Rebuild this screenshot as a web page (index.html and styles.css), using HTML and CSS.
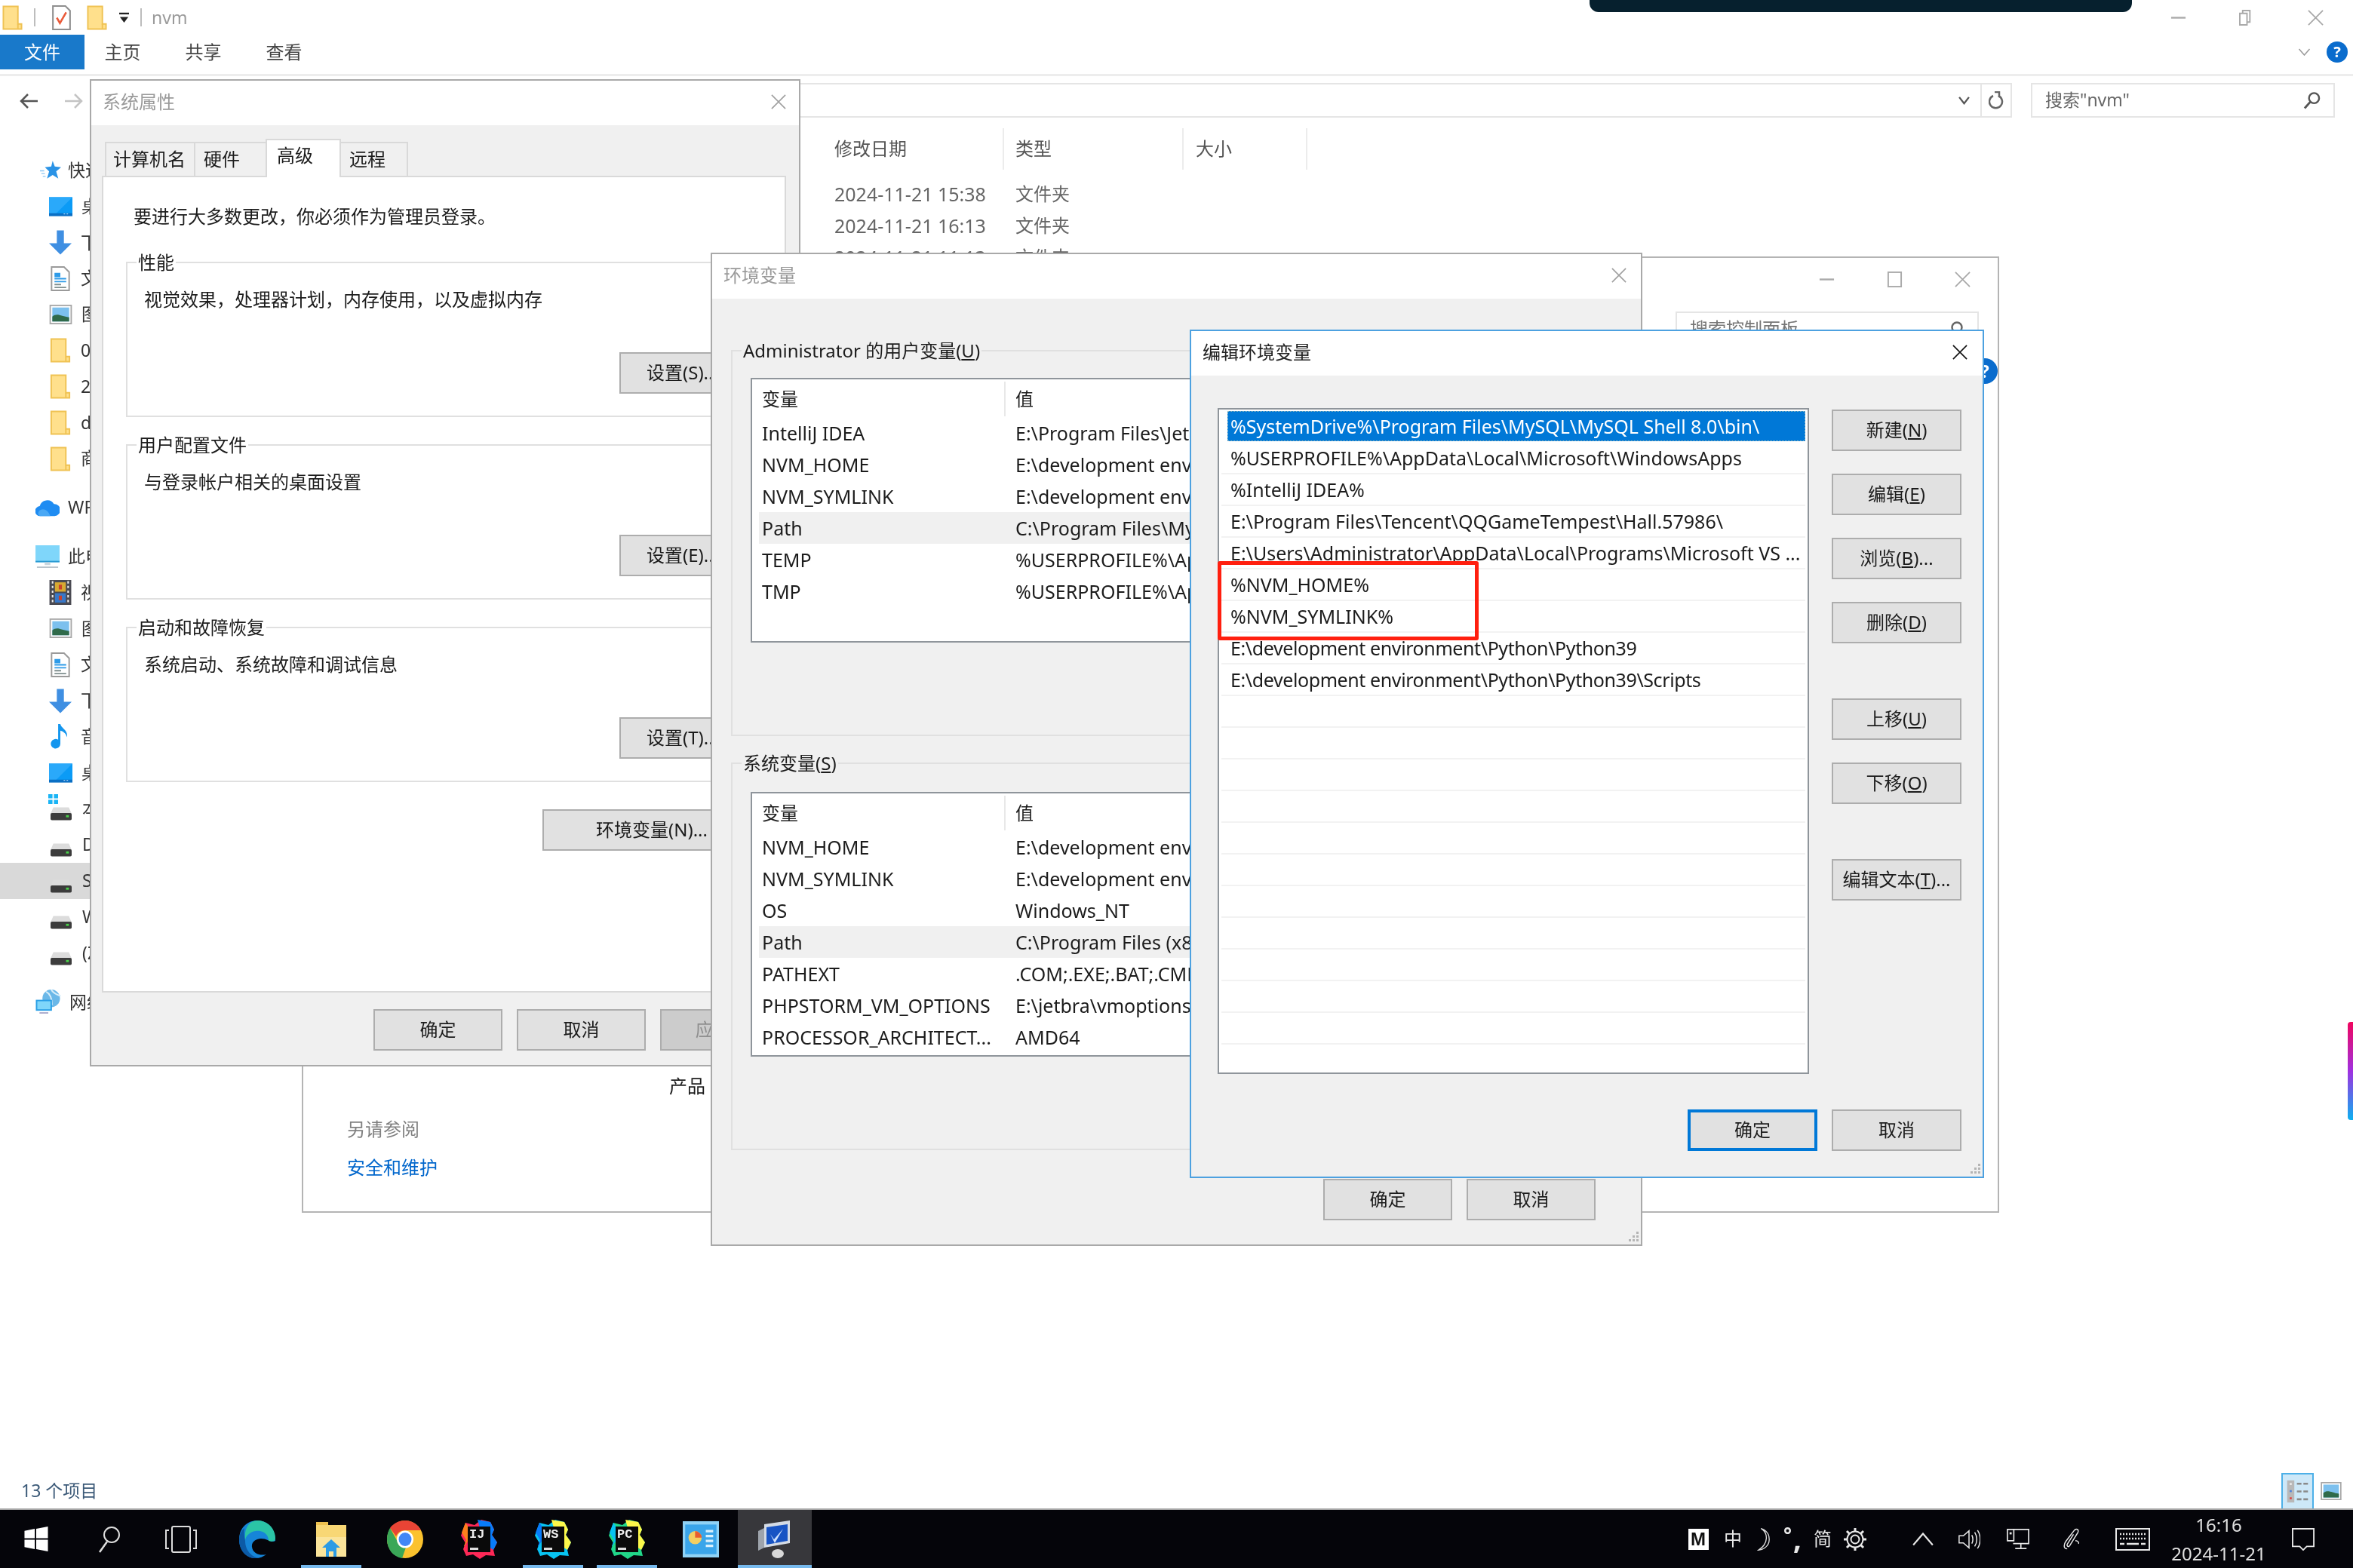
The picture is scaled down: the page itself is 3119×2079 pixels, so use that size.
FILE: index.html
```html
<!DOCTYPE html>
<html lang="zh-CN">
<head>
<meta charset="utf-8">
<title>nvm</title>
<link rel="stylesheet" href="styles.css">
</head>
<body>
<svg class="defs" aria-hidden="true">
  <symbol id="i-folder" viewBox="0 0 28 34"><path d="M1.5 1.500h20v24h5v7h-25z" fill="#ffe08c" stroke="#efc253" stroke-width="2"/><path d="M21.500 25.500v7" stroke="#efc253" stroke-width="2"/></symbol>
  <symbol id="i-desk" viewBox="0 0 32 26"><rect width="32" height="24" fill="#0b9bf6"/><path d="M0 0h32L8 24H0z" fill="#2aa9fa"/><rect y="22" width="32" height="4" fill="#0a6fc4"/><path d="M20 23h2M24 23h2" stroke="#cfe9ff"/></symbol>
  <symbol id="i-down" viewBox="0 0 32 34"><path d="M11 0h10v18h11L16 34 0 18h11z" fill="#3f8fe2"/></symbol>
  <symbol id="i-doc" viewBox="0 0 26 34"><path d="M1 1h17l7 7v25H1z" fill="#fff" stroke="#9a9a9a" stroke-width="2"/><path d="M6 10h6v4H6zM5 17h16M5 21h16" stroke="#2e9be8" stroke-width="2" fill="#2e9be8"/><path d="M5 25h9M5 29h16" stroke="#7f8f8f" stroke-width="2"/></symbol>
  <symbol id="i-pic" viewBox="0 0 32 28"><rect x="1" y="1" width="30" height="26" fill="#fff" stroke="#a8a8a8" stroke-width="2"/><rect x="4" y="4" width="24" height="20" fill="#7cc0ee"/><path d="M4 17c7-6 13 0 24 1v6H4z" fill="#2f6a4a"/></symbol>
  <symbol id="i-star" viewBox="0 0 30 26"><path d="M18 0l3 8 9 1-7 6 3 10-8-5-8 5 3-10-6-6 9-1z" fill="#2a93e6"/><path d="M0 14h6M2 18h5M4 22h4" stroke="#8cc5f2" stroke-width="1.500"/></symbol>
  <symbol id="i-cloud" viewBox="0 0 34 24"><path d="M7 24a7 7 0 0 1-1-14 11 11 0 0 1 20-3 8.500 8.500 0 0 1 1 17z" fill="#1f8cf2"/><path d="M6 24a5 5 0 0 1 2-9c4-2 10 1 13 9z" fill="#4aa8f5"/></symbol>
  <symbol id="i-pc" viewBox="0 0 34 32"><rect width="34" height="24" fill="#7fd6fa"/><rect y="22" width="34" height="2" fill="#2a9ad2"/><path d="M13 24h8v4h-8z" fill="#c9d6de"/><path d="M2 31h30" stroke="#b8c4cc" stroke-width="2"/></symbol>
  <symbol id="i-video" viewBox="0 0 28 32"><rect width="28" height="32" fill="#4a4a52"/><path d="M3 3h2M3 9h2M3 15h2M3 21h2M3 27h2M23 3h2M23 9h2M23 15h2M23 21h2M23 27h2" stroke="#eee" stroke-width="3"/><rect x="7" y="3" width="14" height="12" fill="#d8a932"/><rect x="7" y="17" width="14" height="12" fill="#3878c8"/><path d="M12 6h4v6h-4zM12 20h4v6h-4z" fill="#c8402a"/></symbol>
  <symbol id="i-music" viewBox="0 0 26 34"><path d="M10 0h3c1 6 11 8 9 18-1-5-5-8-9-9v18a6.500 6.500 0 1 1-3-5.500z" fill="#1496ee"/></symbol>
  <symbol id="i-drive" viewBox="0 0 30 18"><path d="M4 0h22l4 9H0z" fill="#dcdcdc"/><rect y="8" width="30" height="10" rx="2" fill="#3c3c3c"/><rect x="22" y="11" width="4" height="3" fill="#4ad24a"/></symbol>
  <symbol id="i-flag" viewBox="0 0 14 14"><path d="M0 0h6v6H0zM8 0h6v6H8zM0 8h6v6H0zM8 8h6v6H8z" fill="#1ab4f5"/></symbol>
  <symbol id="i-net" viewBox="0 0 34 34"><circle cx="21" cy="12" r="12" fill="#6bb8e8"/><path d="M14 3c4 2 8 7 8 18M21 0c3 6 9 7 13 9" stroke="#d8eefa" fill="none" stroke-width="2"/><rect y="14" width="22" height="15" fill="#2a9fe6"/><rect x="2" y="16" width="18" height="11" fill="#7fd6fa"/><path d="M5 32h12" stroke="#aac" stroke-width="2"/></symbol>
  <symbol id="i-close" viewBox="0 0 22 22"><path d="M1 1l20 20M21 1L1 21" fill="none" stroke="currentColor" stroke-width="1.800"/></symbol>
  <symbol id="i-grip" viewBox="0 0 16 16"><path d="M12 1h3v3h-3zM7 6h3v3H7zM12 6h3v3h-3zM2 11h3v3H2zM7 11h3v3H7zM12 11h3v3h-3z" fill="#b4b4b4"/></symbol>
  <symbol id="i-search" viewBox="0 0 24 24"><circle cx="15" cy="9" r="7" fill="none" stroke="currentColor" stroke-width="2.500"/><path d="M10 14L2 23" stroke="currentColor" stroke-width="3"/></symbol>
  <symbol id="i-jb" viewBox="0 0 48 52"><path d="M6 4l12 3 9-7 12 3 5 10-3 7 7 10-5 10 2 8-12-1-8 5-9-6-9 2-4-9 3-8-6-10z" fill="var(--jb1)"/><path d="M22 0l17 3 5 10-3 7 7 10-5 10-12-8z" fill="var(--jb2)"/><path d="M6 4l10 14L4 36l3 11-3-12 3-8-6-10z" fill="var(--jb3)"/><rect x="9" y="9" width="30" height="34" fill="#0a0a0a"/><rect x="12" y="37" width="11" height="3" fill="#ddd"/></symbol>
</svg>

<div class="desktop">
  <div class="explorer">
    <div class="titlebar">
      <svg class="ico-folder-top"><use href="#i-folder"/></svg>
      <span class="tb-sep"></span>
      <svg class="ico-check" viewBox="0 0 24 32"><path d="M1 1h16l6 6v24H1z" fill="#fff" stroke="#8f8f8f" stroke-width="2"/><path d="M6 16l4 7 8-14" fill="none" stroke="#ea5b3a" stroke-width="2.500"/></svg>
      <svg class="ico-folder-top"><use href="#i-folder"/></svg>
      <svg class="ico-qat" viewBox="0 0 14 16"><path d="M0 2h14" stroke="#222" stroke-width="2.500"/><path d="M1 7h12l-6 8z" fill="#222"/></svg>
      <span class="tb-sep"></span>
      <span class="tb-title">nvm</span>
      <div class="notch"></div>
      <div class="winbtns">
        <svg class="wb" viewBox="0 0 22 22"><path d="M1 11h20" stroke="#aaa" stroke-width="2.500"/></svg>
        <svg class="wb" viewBox="0 0 22 22"><path d="M5 5V1h10v16h-4M1 5h10v16H1z" fill="none" stroke="#aaa" stroke-width="2"/></svg>
        <svg class="wb wb-x"><use href="#i-close"/></svg>
      </div>
    </div>
    <div class="ribbon">
      <span class="rtab rtab-on">文件</span>
      <span class="rtab">主页</span>
      <span class="rtab">共享</span>
      <span class="rtab">查看</span>
      <svg class="r-chev" viewBox="0 0 16 10"><path d="M1 1l7 8 7-8" fill="none" stroke="#999" stroke-width="1.500"/></svg>
      <span class="helpdot">?</span>
    </div>
    <div class="navrow">
      <svg class="nav-arrow" viewBox="0 0 26 22"><path d="M25 11H3M12 2l-9 9 9 9" fill="none" stroke="#555" stroke-width="2.500"/></svg>
      <svg class="nav-arrow nav-fwd" viewBox="0 0 26 22"><path d="M1 11h22M14 2l9 9-9 9" fill="none" stroke="#c4c4c4" stroke-width="2.500"/></svg>
      <div class="addr">
        <svg class="addr-chev" viewBox="0 0 16 12"><path d="M1 1l7 9 7-9" fill="none" stroke="#555" stroke-width="2.500"/></svg>
        <span class="addr-refresh"><svg class="refresh-ico" viewBox="0 0 20 24"><path d="M6 6a8.500 8.500 0 1 0 7 0" fill="none" stroke="#666" stroke-width="2.500"/><path d="M8 1h6v7" fill="none" stroke="#666" stroke-width="2.500"/></svg></span>
      </div>
      <div class="searchbox">
        <span class="search-text">搜索"nvm"</span>
        <svg class="search-ico"><use href="#i-search"/></svg>
      </div>
    </div>
    <div class="main">
      <nav class="sidebar">
        <div class="sb-row sb-top"><svg class="sb-ico ic-star"><use href="#i-star"/></svg><span>快速访问</span></div>
        <div class="sb-row sb-sub"><svg class="sb-ico ic-wide"><use href="#i-desk"/></svg><span>桌面</span></div>
        <div class="sb-row sb-sub"><svg class="sb-ico ic-tall"><use href="#i-down"/></svg><span>下载</span></div>
        <div class="sb-row sb-sub"><svg class="sb-ico ic-tall"><use href="#i-doc"/></svg><span>文档</span></div>
        <div class="sb-row sb-sub"><svg class="sb-ico ic-wide"><use href="#i-pic"/></svg><span>图片</span></div>
        <div class="sb-row sb-sub"><svg class="sb-ico ic-tall"><use href="#i-folder"/></svg><span>01</span></div>
        <div class="sb-row sb-sub"><svg class="sb-ico ic-tall"><use href="#i-folder"/></svg><span>2024</span></div>
        <div class="sb-row sb-sub"><svg class="sb-ico ic-tall"><use href="#i-folder"/></svg><span>docs</span></div>
        <div class="sb-row sb-sub"><svg class="sb-ico ic-tall"><use href="#i-folder"/></svg><span>商城</span></div>
        <div class="sb-row sb-top sb-gap"><svg class="sb-ico ic-cloud"><use href="#i-cloud"/></svg><span>WPS网盘</span></div>
        <div class="sb-row sb-top sb-gap"><svg class="sb-ico ic-cloud"><use href="#i-pc"/></svg><span>此电脑</span></div>
        <div class="sb-row sb-sub"><svg class="sb-ico ic-tall"><use href="#i-video"/></svg><span>视频</span></div>
        <div class="sb-row sb-sub"><svg class="sb-ico ic-wide"><use href="#i-pic"/></svg><span>图片</span></div>
        <div class="sb-row sb-sub"><svg class="sb-ico ic-tall"><use href="#i-doc"/></svg><span>文档</span></div>
        <div class="sb-row sb-sub"><svg class="sb-ico ic-tall"><use href="#i-down"/></svg><span>下载</span></div>
        <div class="sb-row sb-sub"><svg class="sb-ico ic-tall"><use href="#i-music"/></svg><span>音乐</span></div>
        <div class="sb-row sb-sub"><svg class="sb-ico ic-wide"><use href="#i-desk"/></svg><span>桌面</span></div>
        <div class="sb-row sb-sub"><svg class="sb-ico ic-drive"><use href="#i-drive"/></svg><svg class="ic-flag"><use href="#i-flag"/></svg><span>本地磁盘 (C:)</span></div>
        <div class="sb-row sb-sub"><svg class="sb-ico ic-drive"><use href="#i-drive"/></svg><span>D (D:)</span></div>
        <div class="sb-row sb-sub sb-on"><svg class="sb-ico ic-drive"><use href="#i-drive"/></svg><span>S (S:)</span></div>
        <div class="sb-row sb-sub"><svg class="sb-ico ic-drive"><use href="#i-drive"/></svg><span>W (W:)</span></div>
        <div class="sb-row sb-sub"><svg class="sb-ico ic-drive"><use href="#i-drive"/></svg><span>(Z:)</span></div>
        <div class="sb-row sb-top sb-gap"><svg class="sb-ico ic-net"><use href="#i-net"/></svg><span>网络</span></div>
      </nav>
      <section class="files">
        <div class="f-head">
          <span class="fc fc-date">修改日期</span>
          <span class="fc fc-type">类型</span>
          <span class="fc fc-size">大小</span>
        </div>
        <div class="f-row"><span class="fc-date">2024-11-21 15:38</span><span class="fc-type f-cjk">文件夹</span></div>
        <div class="f-row"><span class="fc-date">2024-11-21 16:13</span><span class="fc-type f-cjk">文件夹</span></div>
        <div class="f-row"><span class="fc-date">2024-11-21 11:13</span><span class="fc-type f-cjk">文件夹</span></div>
      </section>
    </div>
    <div class="statusbar">
      <span class="st-count">13 个项目</span>
      <div class="viewbtns">
        <span class="vb-on"><svg class="vb-list" viewBox="0 0 36 36"><rect x="2" y="1" width="11" height="34" fill="#b8b8b8"/><path d="M6 5h3v3H6z" fill="#eee"/><path d="M6 16h3v3H6z" fill="#4a80e0"/><path d="M6 27h3v3H6z" fill="#e04040"/><path d="M17 6h7M27 6h7M17 18h7M27 18h7M17 30h7M27 30h7" stroke="#8a8a8a" stroke-width="3"/></svg></span>
        <svg class="vb-pic"><use href="#i-pic"/></svg>
      </div>
    </div>
  </div>

  <footer class="taskbar">
    <div class="tb-group tb-group-sys">
      <span class="tk"><svg class="tk-win" viewBox="0 0 32 34"><path d="M0 6l14-3v13H0zM16 3l16-3v16H16zM0 18h14v13L0 28zM16 18h16v16l-16-3z" fill="#fff"/></svg></span>
      <span class="tk"><svg class="tk-lens" viewBox="0 0 32 36"><circle cx="20" cy="12" r="10" fill="none" stroke="#ddd" stroke-width="2"/><path d="M14 21L4 35" stroke="#ddd" stroke-width="2.500"/></svg></span>
      <span class="tk"><svg class="tk-view" viewBox="0 0 42 36"><rect x="9" y="1" width="24" height="34" rx="2" fill="none" stroke="#ddd" stroke-width="2"/><path d="M5 6H1v24h4M37 6h4v24h-4" fill="none" stroke="#ddd" stroke-width="2"/></svg></span>
    </div>
    <div class="tb-group">
      <span class="tk"><svg class="tk-app" viewBox="0 0 48 50"><path d="M24 0C10 0 0 11 0 25c0 14 9 25 22 25 5 0 10-2 14-5-8 2-18-1-19-10-1-7 6-11 12-11 9 0 13 6 19 3C48 11 38 0 24 0z" fill="#1685d8"/><path d="M24 0c12 0 24 9 24 24 0 3-4 5-9 3 0-9-8-14-17-13C14 15 8 21 8 27 6 11 13 0 24 0z" fill="#2bc4a6"/><path d="M8 27c0 12 8 22 20 23-15 3-28-7-28-25 0-6 3-12 7-15-1 5 0 12 1 17z" fill="#0c5aa6"/></svg></span>
      <span class="tk tk-open"><svg class="tk-app" viewBox="0 0 44 50"><path d="M2 2h16v4h24v42H2z" fill="#f8d775"/><path d="M2 2h16v4H2z" fill="#eec150"/><path d="M2 22h40v26H2z" fill="#fbe49b"/><path d="M22 25l12 11h-5v12H15V36h-5z" fill="#2c9be4"/><rect x="19" y="41" width="6" height="7" fill="#fbe49b"/></svg></span>
      <span class="tk"><svg class="tk-app" viewBox="0 0 48 50"><ellipse cx="24" cy="25" rx="24" ry="25" fill="#fbc22e"/><path d="M24 0c9 0 17 5 21 13H24c-6 0-10 3-12 8L4 10C8 4 16 0 24 0z" fill="#e94435"/><path d="M4 10l10 18c2 4 7 6 12 5L20 50C8 48 0 38 0 25c0-5 1-10 4-15z" fill="#3aa757"/><ellipse cx="24" cy="25" rx="11" ry="11.500" fill="#fff"/><ellipse cx="24" cy="25" rx="8.500" ry="9" fill="#4287f5"/></svg></span>
      <span class="tk"><span class="jb jb-ij"><svg class="jb-ico"><use href="#i-jb"/></svg><b class="jb-txt">IJ</b></span></span>
      <span class="tk tk-open"><span class="jb jb-ws"><svg class="jb-ico"><use href="#i-jb"/></svg><b class="jb-txt">WS</b></span></span>
      <span class="tk tk-open"><span class="jb jb-pc"><svg class="jb-ico"><use href="#i-jb"/></svg><b class="jb-txt">PC</b></span></span>
      <span class="tk"><svg class="tk-app" viewBox="0 0 44 44"><rect width="44" height="44" fill="#8fd2f5"/><rect x="3" y="4" width="38" height="36" fill="#3aa5ea"/><circle cx="15" cy="20" r="8" fill="#f4cf62"/><path d="M15 20V12a8 8 0 0 1 8 8z" fill="#e85c30"/><path d="M28 12h9M28 18h9M28 24h9M28 30h9" stroke="#d9f0fd" stroke-width="3"/></svg></span>
      <span class="tk tk-active"><svg class="tk-app" viewBox="0 0 48 50"><path d="M2 14L10 10v26l-8 4z" fill="#9ea4ac"/><path d="M10 5l34-5v30L10 36z" fill="#d4dbe5"/><path d="M13 9l28-4v22l-28 5z" fill="#1854c4"/><path d="M18 18l5 7 12-14-11 19z" fill="#cfe2ff"/><ellipse cx="28" cy="44" rx="8" ry="6" fill="#d8d8d8"/></svg></span>
    </div>
    <div class="tray">
      <span class="tray-m">M</span>
      <span class="tray-t">中</span>
      <svg class="tray-moon" viewBox="0 0 20 34"><path d="M6 1c10 6 12 22-4 32 4 0 16-4 16-16C18 8 12 3 6 1z" fill="none" stroke="#ddd" stroke-width="1.500"/></svg>
      <span class="tray-p"><i>°</i><b>,</b></span>
      <span class="tray-t">简</span>
      <svg class="tray-gear" viewBox="0 0 32 32"><circle cx="16" cy="16" r="5.500" fill="none" stroke="#e8e8e8" stroke-width="2"/><circle cx="16" cy="16" r="10.500" fill="none" stroke="#e8e8e8" stroke-width="2"/><path d="M16 1v5M16 26v5M1 16h5M26 16h5M5 5l4 4M23 23l4 4M27 5l-4 4M9 23l-4 4" stroke="#e8e8e8" stroke-width="3"/></svg>
      <span></span>
      <svg class="tray-ic" viewBox="0 0 28 18"><path d="M2 16L14 2l12 14" fill="none" stroke="#e8e8e8" stroke-width="2"/></svg>
      <svg class="tray-ic" viewBox="0 0 32 30"><path d="M2 10h6l8-7v24l-8-7H2z" fill="none" stroke="#e8e8e8" stroke-width="1.600"/><path d="M20 9c2 4 2 8 0 12M24 5c4 6 4 14 0 20M28 2c5 7 5 19 0 26" fill="none" stroke="#e8e8e8" stroke-width="1.600"/></svg>
      <svg class="tray-ic" viewBox="0 0 32 30"><path d="M9 1h22v20H9M1 1h9v16H1zM20 21v6M12 28h16" fill="none" stroke="#e8e8e8" stroke-width="1.800"/><path d="M4 5h3v3H4z" fill="#e8e8e8"/></svg>
      <svg class="tray-ic" viewBox="0 0 28 36"><path d="M7 33C0 33 2 25 5 21L18 4c3-4 8-2 6 3L11 28c-2 3-5 1-4-2L17 10" fill="none" stroke="#e8e8e8" stroke-width="1.800"/><path d="M20 20c4 0 6 3 5 5" fill="none" stroke="#e8e8e8" stroke-width="1.800"/></svg>
      <svg class="tray-kb" viewBox="0 0 46 30"><rect x="1" y="1" width="44" height="28" fill="none" stroke="#e8e8e8" stroke-width="2"/><path d="M6 8h34M6 14h34" stroke="#e8e8e8" stroke-width="2.500" stroke-dasharray="2 2"/><path d="M6 21h6M15 21h16M34 21h6" stroke="#e8e8e8" stroke-width="2.500"/></svg>
      <div class="clock"><span>16:16</span><span>2024-11-21</span></div>
      <svg class="tray-ic" viewBox="0 0 32 32"><path d="M1 1h30v25H21l-5 5-5-5H1z" fill="none" stroke="#e8e8e8" stroke-width="2"/></svg>
    </div>
  </footer>

  <div class="win win-cp">
    <div class="cp-title">
      <svg class="wb" viewBox="0 0 22 22"><path d="M1 11h20" stroke="#aaa" stroke-width="2.500"/></svg>
      <svg class="wb" viewBox="0 0 22 22"><rect x="2" y="1" width="18" height="20" fill="none" stroke="#aaa" stroke-width="2"/></svg>
      <svg class="wb wb-x"><use href="#i-close"/></svg>
    </div>
    <div class="cp-search"><span>搜索控制面板</span><svg class="cp-lens" viewBox="0 0 20 20"><circle cx="10" cy="8" r="6.500" fill="none" stroke="#666" stroke-width="2.500"/></svg></div>
    <span class="cp-help">?</span>
    <div class="cp-side">
      <p class="cp-product">产品</p>
      <p class="cp-see">另请参阅</p>
      <p class="cp-link">安全和维护</p>
    </div>
  </div>

  <div class="win win-sys">
    <div class="dlg-title"><span>系统属性</span><svg class="dlg-x"><use href="#i-close"/></svg></div>
    <div class="dlg-body sys-body">
      <div class="tabs">
        <span class="tab tab-a">计算机名</span>
        <span class="tab tab-b">硬件</span>
        <span class="tab tab-c tab-on">高级</span>
        <span class="tab tab-d">远程</span>
      </div>
      <div class="panel">
        <p class="panel-note">要进行大多数更改，你必须作为管理员登录。</p>
        <div class="sys-group">
          <span class="legend">性能</span>
          <p class="sys-desc">视觉效果，处理器计划，内存使用，以及虚拟内存</p>
          <button class="btn btn-set">设置(S)...</button>
        </div>
        <div class="sys-group">
          <span class="legend">用户配置文件</span>
          <p class="sys-desc">与登录帐户相关的桌面设置</p>
          <button class="btn btn-set">设置(E)...</button>
        </div>
        <div class="sys-group">
          <span class="legend">启动和故障恢复</span>
          <p class="sys-desc">系统启动、系统故障和调试信息</p>
          <button class="btn btn-set">设置(T)...</button>
        </div>
        <button class="btn btn-env">环境变量(N)...</button>
      </div>
      <div class="dlg-foot sys-foot">
        <button class="btn">确定</button>
        <button class="btn">取消</button>
        <button class="btn btn-off">应用(A)</button>
      </div>
    </div>
  </div>

  <div class="win win-env">
    <div class="dlg-title"><span>环境变量</span><svg class="dlg-x"><use href="#i-close"/></svg></div>
    <div class="dlg-body env-body">
      <div class="env-group">
        <span class="legend legend-env">Administrator 的用户变量(<u>U</u>)</span>
        <div class="lv">
          <div class="lv-head"><span class="lv-k">变量</span><span class="lv-v">值</span></div>
          <div class="lv-row"><span class="lv-k">IntelliJ IDEA</span><span class="lv-v">E:\Program Files\JetBrains\IntelliJ IDEA\bin;</span></div>
          <div class="lv-row"><span class="lv-k">NVM_HOME</span><span class="lv-v">E:\development environment\nvm</span></div>
          <div class="lv-row"><span class="lv-k">NVM_SYMLINK</span><span class="lv-v">E:\development environment\nodejs</span></div>
          <div class="lv-row lv-hi"><span class="lv-k">Path</span><span class="lv-v">C:\Program Files\MySQL\MySQL Shell 8.0\bin\</span></div>
          <div class="lv-row"><span class="lv-k">TEMP</span><span class="lv-v">%USERPROFILE%\AppData\Local\Temp</span></div>
          <div class="lv-row"><span class="lv-k">TMP</span><span class="lv-v">%USERPROFILE%\AppData\Local\Temp</span></div>
        </div>
      </div>
      <div class="env-group env-group-sys">
        <span class="legend legend-env">系统变量(<u>S</u>)</span>
        <div class="lv">
          <div class="lv-head"><span class="lv-k">变量</span><span class="lv-v">值</span></div>
          <div class="lv-row"><span class="lv-k">NVM_HOME</span><span class="lv-v">E:\development environment\nvm</span></div>
          <div class="lv-row"><span class="lv-k">NVM_SYMLINK</span><span class="lv-v">E:\development environment\nodejs</span></div>
          <div class="lv-row"><span class="lv-k">OS</span><span class="lv-v">Windows_NT</span></div>
          <div class="lv-row lv-hi"><span class="lv-k">Path</span><span class="lv-v">C:\Program Files (x86)\Common Files\Oracle</span></div>
          <div class="lv-row"><span class="lv-k">PATHEXT</span><span class="lv-v">.COM;.EXE;.BAT;.CMD;.VBS;.VBE;.JS;.JSE</span></div>
          <div class="lv-row"><span class="lv-k">PHPSTORM_VM_OPTIONS</span><span class="lv-v">E:\jetbra\vmoptions\phpstorm.vmoptions</span></div>
          <div class="lv-row"><span class="lv-k">PROCESSOR_ARCHITECT...</span><span class="lv-v">AMD64</span></div>
        </div>
      </div>
      <div class="dlg-foot env-foot">
        <button class="btn">确定</button>
        <button class="btn">取消</button>
      </div>
      <svg class="grip"><use href="#i-grip"/></svg>
    </div>
  </div>

  <div class="win win-edit">
    <div class="dlg-title"><span>编辑环境变量</span><svg class="dlg-x"><use href="#i-close"/></svg></div>
    <div class="dlg-body edit-body">
      <div class="edit-main">
        <div class="pathlist">
          <div class="p-row p-sel"><span>%SystemDrive%\Program Files\MySQL\MySQL Shell 8.0\bin\</span></div>
          <div class="p-row"><span>%USERPROFILE%\AppData\Local\Microsoft\WindowsApps</span></div>
          <div class="p-row"><span>%IntelliJ IDEA%</span></div>
          <div class="p-row"><span>E:\Program Files\Tencent\QQGameTempest\Hall.57986\</span></div>
          <div class="p-row"><span>E:\Users\Administrator\AppData\Local\Programs\Microsoft VS ...</span></div>
          <div class="p-row"><span>%NVM_HOME%</span></div>
          <div class="p-row"><span>%NVM_SYMLINK%</span></div>
          <div class="p-row p-tight"><span>E:\development environment\Python\Python39</span></div>
          <div class="p-row p-tight"><span>E:\development environment\Python\Python39\Scripts</span></div>
          <div class="p-row"></div><div class="p-row"></div><div class="p-row"></div>
          <div class="p-row"></div><div class="p-row"></div><div class="p-row"></div>
          <div class="p-row"></div><div class="p-row"></div><div class="p-row"></div>
          <div class="p-row"></div><div class="p-row"></div>
        </div>
        <div class="edit-btns">
          <button class="btn">新建(<u>N</u>)</button>
          <button class="btn">编辑(<u>E</u>)</button>
          <button class="btn">浏览(<u>B</u>)...</button>
          <button class="btn">删除(<u>D</u>)</button>
          <button class="btn btn-sep">上移(<u>U</u>)</button>
          <button class="btn">下移(<u>O</u>)</button>
          <button class="btn btn-sep">编辑文本(<u>T</u>)...</button>
        </div>
      </div>
      <div class="dlg-foot edit-foot">
        <button class="btn btn-def">确定</button>
        <button class="btn">取消</button>
      </div>
      <div class="redbox"></div>
      <svg class="grip"><use href="#i-grip"/></svg>
    </div>
  </div>

  <div class="edgebar"></div>
</div>
</body>
</html>
```
FILE: styles.css
```css
* { box-sizing: border-box; }
html, body { margin: 0; padding: 0; background: #fff; }
p { margin: 0; }
.defs { position: absolute; width: 0; height: 0; }
.desktop {
  position: relative; width: 3119px; height: 2079px; overflow: hidden;
  display: flex; flex-direction: column; background: #fff; color: #1c1c1c;
  font: 24px/1.2 "Noto Sans", "Noto Sans CJK SC", sans-serif;
  filter: blur(0.7px);
}
.explorer { flex: 1; display: flex; flex-direction: column; min-height: 0; }

/* title bar */
.titlebar { height: 46px; display: flex; align-items: center; padding-left: 3px; position: relative; }
.ico-folder-top { width: 27px; height: 33px; }
.titlebar > .ico-folder-top:nth-of-type(3) { margin-left: 21px; }
.tb-sep { width: 2px; height: 24px; background: #bdbdbd; margin: 0 0 0 15px; }
.ico-check { width: 25px; height: 33px; margin-left: 22px; }
.ico-qat { width: 13px; height: 15px; margin-left: 16px; }
.tb-sep + .tb-title { margin-left: 13px; padding-top: 2px; }
.tb-title { color: #9a9a9a; font-size: 23px; }
.notch { position: absolute; left: 2107px; top: 0; width: 719px; height: 16px; background: #06202e; border-radius: 0 0 12px 12px; }
.winbtns { margin-left: auto; display: flex; gap: 70px; padding-right: 39px; }
.wb { width: 21px; height: 21px; }
.wb-x { color: #a8a8a8; }

/* ribbon */
.ribbon { height: 55px; border-bottom: 3px solid #ededed; display: flex; align-items: flex-start; }
.rtab { width: 107px; height: 46px; text-align: center; line-height: 46px; color: #444; font-size: 24px; }
.rtab-on { width: 112px; background: #1979ca; color: #fff; margin-right: -3px; }
.r-chev { width: 17px; height: 10px; margin: 18px 0 0 auto; }
.helpdot { width: 28px; height: 28px; border-radius: 50%; background: #0a6ccd; color: #fff; text-align: center; font-size: 20px; line-height: 28px; margin: 9px 7px 0 21px; font-weight: 700; }

/* nav row */
.navrow { height: 69px; display: flex; align-items: flex-start; padding-top: 9px; }
.nav-arrow { width: 26px; height: 22px; margin: 13px 0 0 25px; }
.nav-fwd { margin-left: 34px; }
.addr { margin-left: 920px; flex: 1; height: 46px; border: 2px solid #e5e5e5; border-left: 0; display: flex; align-items: center; justify-content: flex-end; }
.addr-chev { width: 15px; height: 11px; margin-right: 14px; }
.addr-refresh { width: 40px; height: 100%; border-left: 2px solid #e5e5e5; display: flex; align-items: center; justify-content: center; }
.refresh-ico { width: 20px; height: 24px; }
.searchbox { margin: 0 24px 0 25px; width: 403px; height: 46px; border: 2px solid #e5e5e5; display: flex; align-items: center; justify-content: space-between; padding: 0 17px 0 17px; color: #666; font-size: 23px; }
.search-ico { width: 23px; height: 24px; color: #555; }

/* main */
.main { flex: 1; display: flex; min-height: 0; }
.sidebar { width: 210px; padding-top: 32px; font-size: 23px; color: #333; }
.sb-row { height: 47.8px; display: flex; align-items: center; position: relative; white-space: nowrap; }
.sb-top { padding-left: 47px; }
.sb-sub { padding-left: 65px; }
.sb-gap { margin-top: 17px; }
.sb-on { background: #d9d9d9; }
.sb-ico { flex: none; margin-right: 12px; }
.ic-star { width: 28px; height: 25px; margin-left: 6px; margin-right: 9px; }
.ic-wide { width: 31px; height: 26px; }
.ic-tall { width: 30px; height: 33px; }
.ic-cloud { width: 32px; height: 30px; margin-right: 11px; }
.ic-net { width: 34px; height: 33px; margin-right: 11px; }
.ic-drive { width: 28px; height: 18px; margin: 14px 14px 0 2px; }
.ic-flag { position: absolute; left: 64px; top: 4px; width: 13px; height: 13px; }
.files { flex: 1; padding-left: 885px; }
.f-head { height: 55px; display: flex; align-items: center; color: #555; }
.fc { height: 100%; display: flex; align-items: center; border-right: 2px solid #ececec; }
.f-head + .f-row { margin-top: 11px; }
.f-row { height: 42px; display: flex; align-items: center; color: #666; font-size: 25px; }
.f-cjk { font-size: 24px; }
.fc-date { width: 236px; padding-left: 11px; }
.fc-type { width: 238px; padding-left: 15px; }
.fc-size { width: 164px; padding-left: 16px; }

/* status */
.statusbar { height: 47px; display: flex; align-items: center; justify-content: space-between; padding: 0 14px 0 28px; color: #3c5a78; font-size: 23px; }
.viewbtns { display: flex; align-items: center; height: 100%; gap: 8px; }
.vb-on { width: 43px; height: 47px; background: #cde8f8; border: 2px solid #4db0e8; border-bottom: 0; display: flex; align-items: center; justify-content: center; }
.vb-list { width: 31px; height: 31px; }
.vb-pic { width: 30px; height: 24px; }

/* taskbar */
.taskbar { height: 79px; flex: none; background: #05050a; border-top: 2px solid #a6a6a6; display: flex; align-items: stretch; }
.tb-group { display: flex; }
.tb-group-sys { width: 292px; }
.tb-group-sys .tk { width: 96px; }
.tk { width: 98px; display: flex; align-items: center; justify-content: center; position: relative; }
.tk-open::after, .tk-active::after { content: ""; position: absolute; left: 9px; right: 9px; bottom: 0; height: 4px; background: #76b9ed; }
.tk-active { background: #37373b; }
.tk-active::after { left: 0; right: 0; }
.tk-win { width: 32px; height: 33px; }
.tk-lens { width: 32px; height: 36px; }
.tk-view { width: 42px; height: 36px; }
.tk-app { width: 48px; height: 50px; }
.jb { position: relative; width: 48px; height: 52px; display: block; --jb1: #fe2857; --jb2: #087cfa; --jb3: #fc801d; }
.jb-ws { --jb1: #07c3f2; --jb2: #fcf84a; --jb3: #087cfa; }
.jb-pc { --jb1: #21d789; --jb2: #fcf84a; --jb3: #07c3f2; }
.jb-ico { width: 48px; height: 52px; }
.jb-txt { position: absolute; left: 11px; top: 11px; font: 700 17px/18px "Liberation Mono", monospace; color: #eee; }
.tray { margin-left: auto; margin-right: 18px; display: grid; grid-template-columns: 40px 52px 30px 46px 34px 52px 28px 72px 50px 80px 62px 100px 128px 96px; align-items: center; justify-items: center; color: #e8e8e8; }
.tray-m { width: 27px; height: 28px; background: #fff; color: #111; text-align: center; font: 700 24px/28px "Liberation Sans", sans-serif; }
.tray-t { font-size: 24px; }
.tray-moon { width: 18px; height: 32px; }
.tray-p { display: flex; align-items: flex-start; height: 40px; }
.tray-p i { font: 700 26px/26px "Noto Sans", sans-serif; }
.tray-p b { font: 700 38px/36px "Noto Sans", sans-serif; margin-left: 2px; }
.tray-gear { width: 32px; height: 32px; }
.tray-ic { width: 30px; height: 30px; }
.tray-kb { width: 46px; height: 30px; }
.clock { display: flex; flex-direction: column; align-items: center; gap: 10px; font-size: 24px; line-height: 28px; color: #e0e0e0; }

/* windows */
.win { position: absolute; background: #fff; display: flex; flex-direction: column; border: 2px solid #a9a9a9; }
.win-cp { left: 400px; top: 340px; width: 2250px; height: 1268px; border-color: #b4b4b4; z-index: 1; display: block; }
.win-sys { left: 119px; top: 105px; width: 942px; height: 1309px; z-index: 2; }
.win-env { left: 942px; top: 335px; width: 1235px; height: 1317px; z-index: 3; }
.win-edit { left: 1577px; top: 437px; width: 1053px; height: 1125px; z-index: 4; border-color: #4da1e0; }

.dlg-title { height: 59px; flex: none; display: flex; align-items: center; justify-content: space-between; padding: 0 19px 3px 15px; color: #9a9a9a; font-size: 24px; background: #fff; }
.dlg-x { width: 20px; height: 20px; color: #a0a0a0; }
.win-sys .dlg-title { padding-right: 17px; }
.win-edit .dlg-title { color: #222; padding: 0 20px 3px 15px; }
.win-edit .dlg-x { color: #111; }
.dlg-body { flex: 1; background: #f0f0f0; position: relative; display: flex; flex-direction: column; min-height: 0; }
.dlg-foot { display: flex; justify-content: flex-end; gap: 19px; }

.btn { width: 171px; height: 55px; padding: 0; background: #e1e1e1; border: 2px solid #adadad; color: #1c1c1c; font: inherit; white-space: nowrap; overflow: hidden; flex: none; }
.btn-off { background: #cccccc; color: #8f8f8f; }
.btn-def { border: 4px solid #0078d7; }

/* control panel behind */
.cp-title { height: 56px; display: flex; justify-content: flex-end; align-items: center; gap: 69px; padding-right: 36px; }
.cp-search { margin: 15px 25px 0 auto; width: 402px; height: 46px; border: 2px solid #e5e5e5; display: flex; align-items: center; justify-content: space-between; padding: 0 17px; color: #777; }
.cp-lens { width: 20px; height: 20px; }
.cp-help { position: absolute; left: 2212px; top: 133px; width: 34px; height: 34px; border-radius: 50%; background: #0a6ccd; color: #fff; text-align: center; line-height: 34px; font-weight: 700; }
.cp-side { padding: 966px 0 0 58px; position: relative; }
.cp-product { margin-left: 427px; line-height: 30px; }
.cp-see { color: #808080; margin-top: 27px; line-height: 30px; }
.cp-link { color: #0066cc; margin-top: 21px; line-height: 30px; }

/* system properties */
.sys-body { padding: 18px 13px 0 14px; }
.tabs { height: 51px; display: flex; align-items: flex-start; padding-left: 4px; position: relative; z-index: 1; margin-bottom: -2px; flex: none; }
.tab { height: 47px; margin-top: 4px; border: 2px solid #d9d9d9; border-right: 0; line-height: 42px; padding-left: 9px; font-size: 24px; background: #f0f0f0; }
.tab-a { width: 118px; }
.tab-b { width: 95px; padding-left: 11px; }
.tab-c { width: 100px; height: 51px; margin-top: 0; line-height: 40px; padding-left: 13px; }
.tab-d { width: 89px; padding-left: 11px; border-right: 2px solid #d9d9d9; }
.tab-on { background: #fff; border-bottom: 0; border-right: 2px solid #d9d9d9; }
.tab-on + .tab { border-left: 0; }
.panel { height: 1083px; width: 907px; background: #fff; border: 2px solid #d9d9d9; padding: 31px 30px 0 30px; flex: none; }
.panel-note { height: 42px; line-height: 42px; padding-left: 10px; margin-bottom: 39px; white-space: nowrap; }
.sys-group { height: 206px; border: 2px solid #e0e0e0; padding: 27px 0 0 22px; position: relative; margin-bottom: 36px; }
.legend { position: absolute; left: 12px; top: -17px; background: #fff; padding: 0 2px; line-height: 32px; white-space: nowrap; }
.sys-desc { height: 42px; line-height: 42px; white-space: nowrap; }
.btn-set { display: block; margin: 49px 0 0 630px; width: 189px; text-align: left; padding-left: 34px; }
.btn-env { display: block; margin: 0 0 0 552px; width: 291px; text-align: left; padding-left: 69px; }
.sys-foot { padding: 22px 0 0 0; }

/* environment variables */
.env-body { padding: 68px 15px 0 25px; }
.env-group { height: 512px; border: 2px solid #e0e0e0; padding: 35px 0 0 24px; position: relative; }
.env-group-sys { height: 514px; margin-top: 35px; padding-top: 37px; }
.legend-env { background: #f0f0f0; }
.lv { height: 351px; background: #fff; border: 2px solid #8f959b; padding: 3px 0 0 9px; white-space: nowrap; }
.lv-head { height: 46px; display: flex; align-items: center; }
.lv-head .lv-k { height: 100%; display: flex; align-items: center; border-right: 2px solid #e8e8e8; }
.lv-row { height: 42px; display: flex; align-items: center; font-size: 25px; }
.lv-head + .lv-row { margin-top: 1px; }
.lv-k { width: 327px; padding-left: 4px; overflow: hidden; flex: none; }
.lv-v { padding-left: 13px; }
.lv-hi { background: #f0f0f0; }
.env-foot { padding: 38px 45px 0 0; }
.grip { position: absolute; right: 2px; bottom: 2px; width: 16px; height: 16px; }

/* edit dialog */
.edit-body { padding: 43px 28px 0 35px; }
.edit-main { display: flex; gap: 30px; height: 930px; flex: none; }
.pathlist { width: 784px; height: 883px; background: #fff; border: 2px solid #8f959b; padding: 2px 3px 0; overflow: hidden; flex: none; font-size: 25px; }
.p-row { height: 42px; border-bottom: 2px solid #f2f2f2; white-space: nowrap; }
.p-row span { display: block; height: 40px; line-height: 40px; margin-left: 8px; padding-left: 4px; }
.p-tight { letter-spacing: -0.4px; }
.p-sel { border-bottom: 0; }
.p-sel span { background: #0078d7; color: #fff; outline: 1px dotted #9bb; outline-offset: -1px; }
.edit-btns { display: flex; flex-direction: column; gap: 30px; padding-top: 2px; }
.edit-btns .btn { width: 172px; }
.btn-sep { margin-top: 43px; }
.edit-foot .btn { width: 172px; }
.redbox { position: absolute; left: 35px; top: 246px; width: 346px; height: 105px; border: 5px solid #ff1f0f; border-radius: 3px; }

.edgebar { position: absolute; right: 0; top: 1355px; width: 7px; height: 130px; border-radius: 4px 0 0 4px; background: linear-gradient(#f0055e, #a030e0 50%, #0cb0f0); z-index: 5; }
```
